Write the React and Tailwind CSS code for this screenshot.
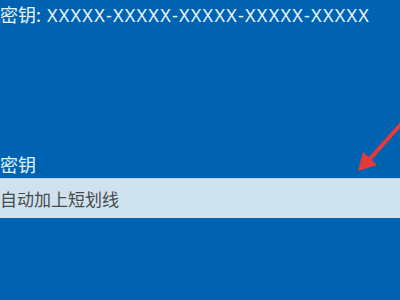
export default function App() {
  return (
    <div className="relative w-[400px] h-[300px] overflow-hidden bg-[#0063b1]" style={{ fontFamily: '"Noto Sans CJK SC", "Noto Sans", sans-serif' }}>
      <div className="pt-[1px] text-[18px] leading-[26px] text-[#e6f6ff] whitespace-nowrap">
        密钥:<span className="font-['Noto_Sans','Noto_Sans_CJK_SC',sans-serif] tracking-[1.25px]"> XXXXX-XXXXX-XXXXX-XXXXX-XXXXX</span>
      </div>
      <div className="mt-[123px] text-[18px] leading-[26px] text-[#e6f6ff]">密钥</div>
      <div className="mt-[1px] h-[40px] bg-[#cfe2ef] border-t border-[#b7d0e2] flex items-center">
        <span className="text-[17px] text-[#4a4a4a]">自动加上短划线</span>
      </div>
      <svg className="absolute left-0 top-0" width="400" height="300" viewBox="0 0 400 300">
        <line x1="402" y1="123" x2="368" y2="161" stroke="#e8393a" strokeWidth="4" strokeLinecap="round" />
        <polygon points="358,171 363,152 377,165" fill="#e8393a" />
      </svg>
    </div>
  );
}
